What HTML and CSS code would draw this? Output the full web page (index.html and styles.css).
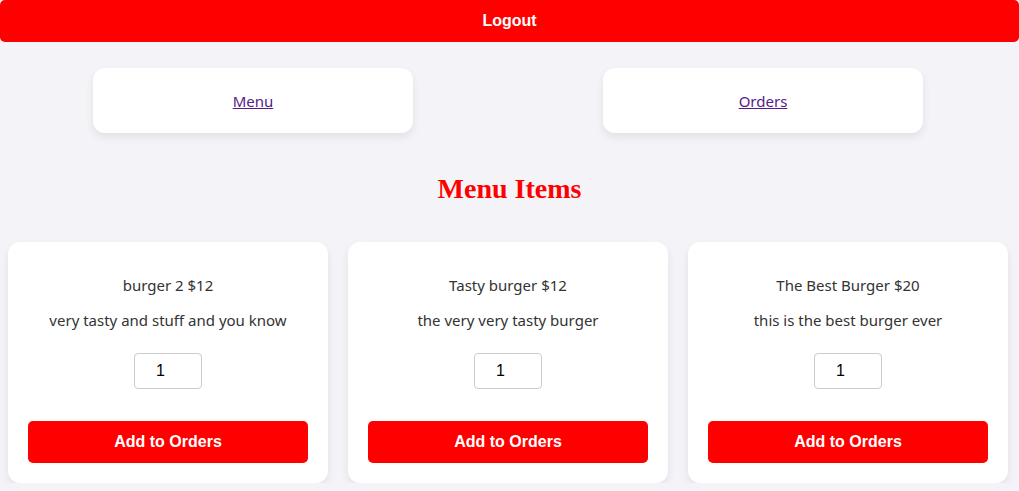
FILE: index.html
```html
<!DOCTYPE html>
<html lang="en">
<head>
<meta charset="utf-8">
<title>Menu</title>
<link rel="stylesheet" href="styles.css">
</head>
<body>
<button class="btn logout">Logout</button>
<nav class="nav">
  <div class="nav-card"><a class="nav-link" href="#menu">Menu</a></div>
  <div class="nav-card"><a class="nav-link" href="#orders">Orders</a></div>
</nav>
<h2 class="title">Menu Items</h2>
<div class="grid">
  <div class="card">
    <p class="name">burger 2 $12</p>
    <p class="desc">very tasty and stuff and you know</p>
    <input class="qty" type="number" value="1" min="1">
    <button class="btn add">Add to Orders</button>
  </div>
  <div class="card">
    <p class="name">Tasty burger $12</p>
    <p class="desc">the very very tasty burger</p>
    <input class="qty" type="number" value="1" min="1">
    <button class="btn add">Add to Orders</button>
  </div>
  <div class="card">
    <p class="name">The Best Burger $20</p>
    <p class="desc">this is the best burger ever</p>
    <input class="qty" type="number" value="1" min="1">
    <button class="btn add">Add to Orders</button>
  </div>
</div>
</body>
</html>
```
FILE: styles.css
```css
body {
  margin: 0;
  background: #f4f4f8;
  font-family: "Noto Sans", sans-serif;
  font-size: 15px;
  color: #333;
}
.btn {
  display: block;
  width: 100%;
  border: none;
  border-radius: 5px;
  background: #ff0000;
  color: #fff;
  font-family: "Liberation Sans", Arial, sans-serif;
  font-weight: bold;
  font-size: 16px;
  line-height: 18px;
  padding: 12px;
  cursor: pointer;
}
.nav {
  display: flex;
  justify-content: center;
  gap: 190px;
  margin-top: 26px;
  padding-right: 3px;
}
.nav-card {
  width: 320px;
  height: 65px;
  display: flex;
  align-items: center;
  justify-content: center;
  background: #fff;
  border-radius: 12px;
  box-shadow: 0 4px 8px rgba(0, 0, 0, 0.08);
}
.nav-link {
  color: #551a8b;
  text-decoration: underline;
}
.title {
  font-family: "Liberation Serif", "Times New Roman", serif;
  font-size: 28px;
  color: #ff0000;
  text-align: center;
  margin: 40px 0 37px;
  line-height: 32px;
}
.grid {
  display: grid;
  grid-template-columns: repeat(3, 320px);
  gap: 20px;
  padding: 0 8px;
}
.card {
  background: #fff;
  border-radius: 12px;
  box-shadow: 0 4px 8px rgba(0, 0, 0, 0.08);
  padding: 17px 20px 20px;
  text-align: center;
}
.card p {
  margin: 16px 0;
  line-height: 21px;
}
.card .name {
  margin-bottom: 14px;
}
.card .desc {
  margin-top: 14px;
  margin-bottom: 22px;
}
.qty {
  width: 50px;
  padding: 8px;
  font-family: "Liberation Sans", Arial, sans-serif;
  font-size: 16px;
  line-height: 18px;
  border: 1px solid #ccc;
  border-radius: 4px;
  text-align: center;
  color: #000;
  margin-bottom: 32px;
}
.add {
  width: 100%;
}
```
